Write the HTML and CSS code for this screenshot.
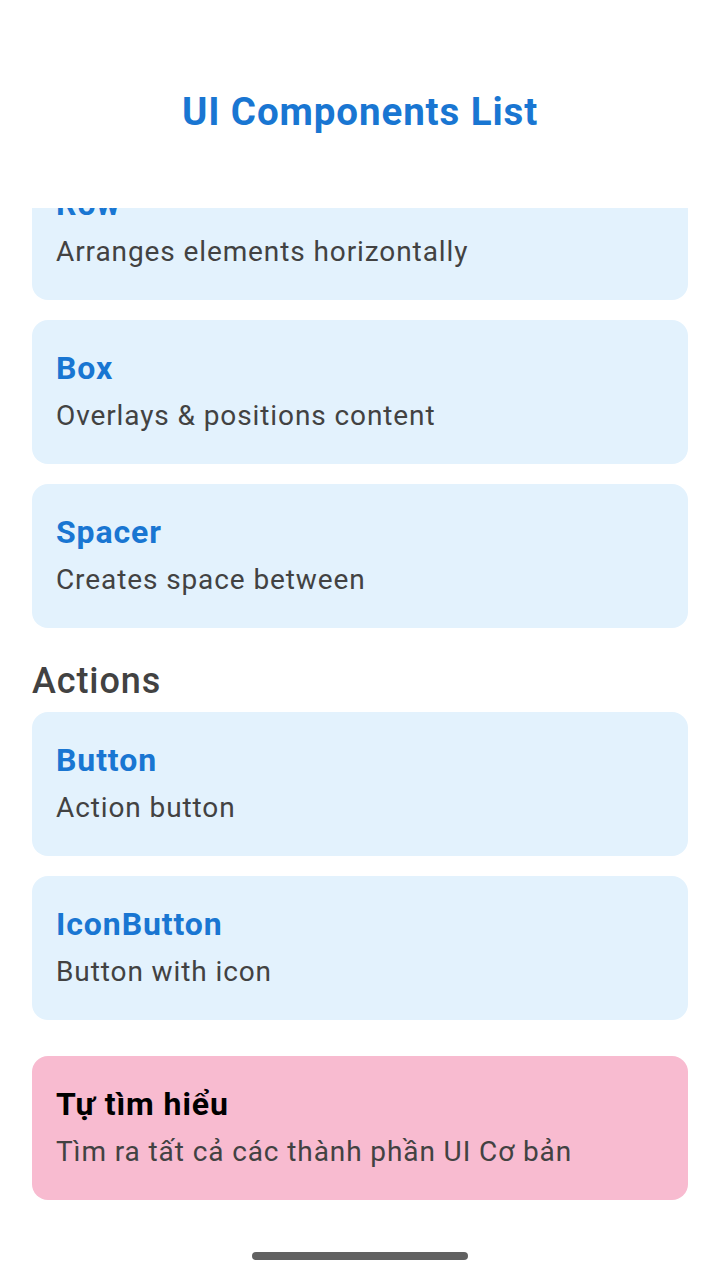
FILE: index.html
```html
<!DOCTYPE html>
<html>
<head>
<meta charset="utf-8">
<link rel="stylesheet" href="styles.css">
</head>
<body>
<div class="screen">
  <header class="header">
    <h1 class="app-title">UI Components List</h1>
  </header>
  <div class="viewport">
    <div class="list">
      <div class="card">
        <div class="card-title">Row</div>
        <div class="card-desc">Arranges elements horizontally</div>
      </div>
      <div class="card">
        <div class="card-title">Box</div>
        <div class="card-desc">Overlays &amp; positions content</div>
      </div>
      <div class="card">
        <div class="card-title">Spacer</div>
        <div class="card-desc">Creates space between</div>
      </div>
      <h2 class="section">Actions</h2>
      <div class="card">
        <div class="card-title">Button</div>
        <div class="card-desc">Action button</div>
      </div>
      <div class="card">
        <div class="card-title">IconButton</div>
        <div class="card-desc">Button with icon</div>
      </div>
      <div class="card card-pink">
        <div class="card-title">Tự tìm hiểu</div>
        <div class="card-desc">Tìm ra tất cả các thành phần UI Cơ bản</div>
      </div>
    </div>
  </div>
  <div class="home-bar"></div>
</div>
</body>
</html>
```
FILE: styles.css
```css
* { box-sizing: border-box; }
html, body { margin: 0; padding: 0; background: #fff; }
body { font-family: Roboto, "Noto Sans", sans-serif; }
.screen {
  width: 720px;
  height: 1280px;
  display: flex;
  flex-direction: column;
  background: #fff;
}
.header {
  height: 208px;
  flex: none;
  display: flex;
  justify-content: center;
  padding-top: 87px;
}
.app-title {
  margin: 0;
  font-size: 38.5px;
  line-height: 50px;
  font-weight: 700;
  letter-spacing: 0.9px;
  color: #1976D2;
  height: 50px;
}
.viewport {
  height: 1000px;
  overflow: hidden;
  flex: none;
}
.list {
  margin-top: -52px;
  padding: 0 32px;
  display: flex;
  flex-direction: column;
  gap: 20px;
}
.card {
  background: #E3F2FD;
  border-radius: 16px;
  padding: 23px 24px 25px;
  height: 144px;
  flex: none;
}
.card-title {
  font-size: 32px;
  line-height: 50px;
  font-weight: 700;
  letter-spacing: 0.9px;
  color: #1976D2;
}
.card-desc {
  font-size: 28px;
  line-height: 46px;
  color: #424242;
  letter-spacing: 0.9px;
}
.section {
  margin: 22px 0 0;
  font-size: 36px;
  line-height: 22px;
  font-weight: 500;
  letter-spacing: 0.9px;
  color: #424242;
}
.card-pink {
  background: #F8BBD0;
  margin-top: 16px;
}
.card-pink .card-title { color: #000; }
.home-bar {
  width: 216px;
  height: 8px;
  border-radius: 4px;
  background: #616161;
  margin: 44px auto 0;
  flex: none;
}
```
